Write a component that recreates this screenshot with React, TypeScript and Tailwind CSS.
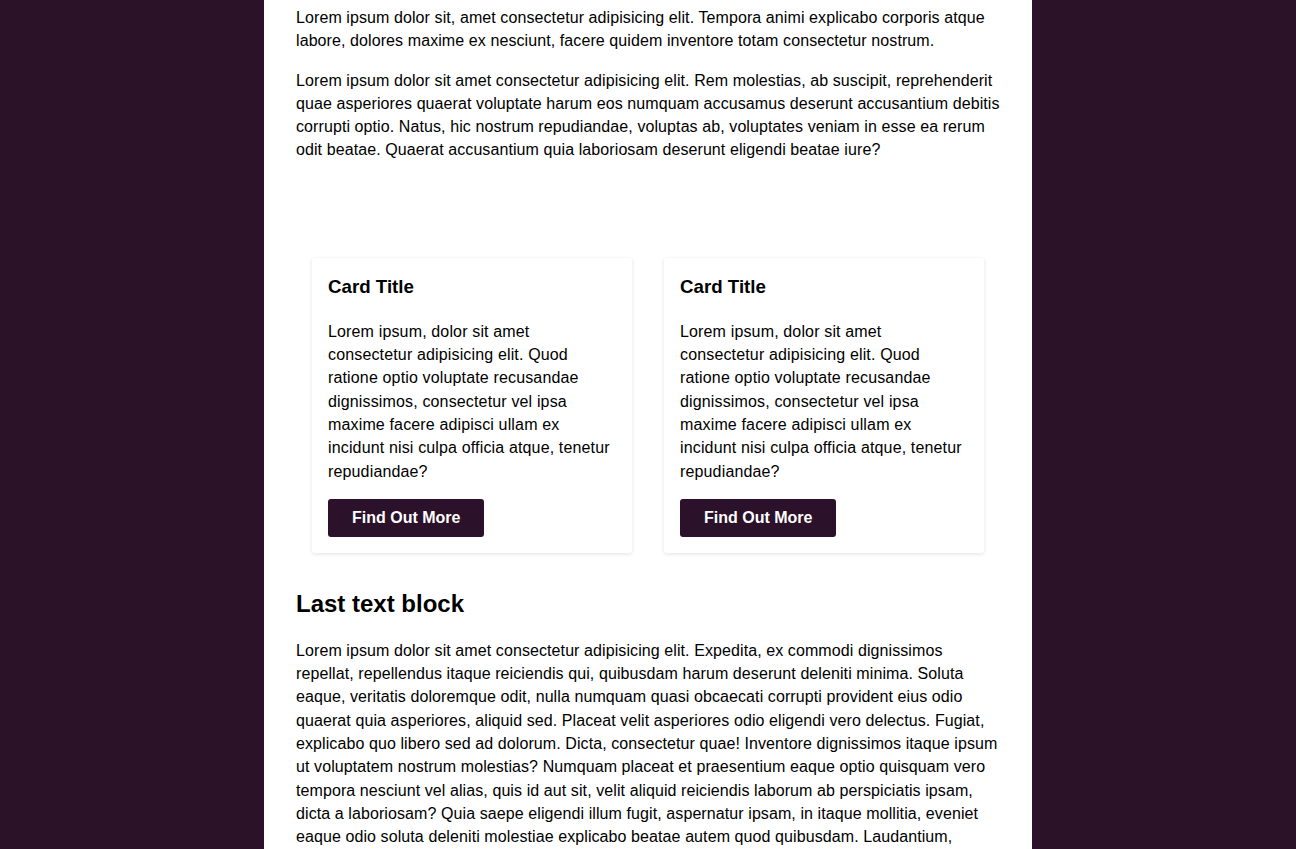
const CardBody =
  "Lorem ipsum, dolor sit amet consectetur adipisicing elit. Quod ratione optio voluptate recusandae dignissimos, consectetur vel ipsa maxime facere adipisci ullam ex incidunt nisi culpa officia atque, tenetur repudiandae?"

const Card = () => (
  <div className="bg-white rounded-[3px] shadow-[0_1px_4px_rgba(0,0,0,0.12)] p-4">
    <h3 className="text-[18.72px] leading-[26px] font-bold text-black mb-5">Card Title</h3>
    <p className="mb-4 tracking-[0.15px]">{CardBody}</p>
    <button className="bg-[#2b1129] text-white font-bold rounded-[3px] h-[38px] px-6 text-[16px]">
      Find Out More
    </button>
  </div>
)

export default function App() {
  return (
    <div className="min-h-screen bg-[#2b1229] font-['Liberation_Sans',Arial,sans-serif] text-[16px] leading-[23.3px] text-black">
      <main className="w-[768px] mx-auto bg-white px-8 pt-[6px] pb-10">
        <p className="mb-4 tracking-[0.09px]">
          Lorem ipsum dolor sit, amet consectetur adipisicing elit. Tempora animi explicabo corporis atque labore,
          dolores maxime ex nesciunt, facere quidem inventore totam consectetur nostrum.
        </p>
        <p className="tracking-[0.09px]">
          Lorem ipsum dolor sit amet consectetur adipisicing elit. Rem molestias, ab suscipit, reprehenderit quae
          asperiores quaerat voluptate harum eos numquam accusamus deserunt accusantium debitis corrupti optio. Natus,
          hic nostrum repudiandae, voluptas ab, voluptates veniam in esse ea rerum odit beatae. Quaerat accusantium quia
          laboriosam deserunt eligendi beatae iure?
        </p>

        <div className="grid grid-cols-2 gap-8 px-4 mt-[96px]">
          <Card />
          <Card />
        </div>

        <h2 className="text-[24px] leading-[35px] font-bold mt-[33px] mb-[18px]">Last text block</h2>
        <p className="tracking-[0.09px]">
          Lorem ipsum dolor sit amet consectetur adipisicing elit. Expedita, ex commodi dignissimos repellat, repellendus
          itaque reiciendis qui, quibusdam harum deserunt deleniti minima. Soluta eaque, veritatis doloremque odit, nulla
          numquam quasi obcaecati corrupti provident eius odio quaerat quia asperiores, aliquid sed. Placeat velit
          asperiores odio eligendi vero delectus. Fugiat, explicabo quo libero sed ad dolorum. Dicta, consectetur quae!
          Inventore dignissimos itaque ipsum ut voluptatem nostrum molestias? Numquam placeat et praesentium eaque optio
          quisquam vero tempora nesciunt vel alias, quis id aut sit, velit aliquid reiciendis laborum ab perspiciatis
          ipsam, dicta a laboriosam? Quia saepe eligendi illum fugit, aspernatur ipsam, in itaque mollitia, eveniet eaque
          odio soluta deleniti molestiae explicabo beatae autem quod quibusdam. Laudantium, nobis.
        </p>
      </main>
    </div>
  )
}
